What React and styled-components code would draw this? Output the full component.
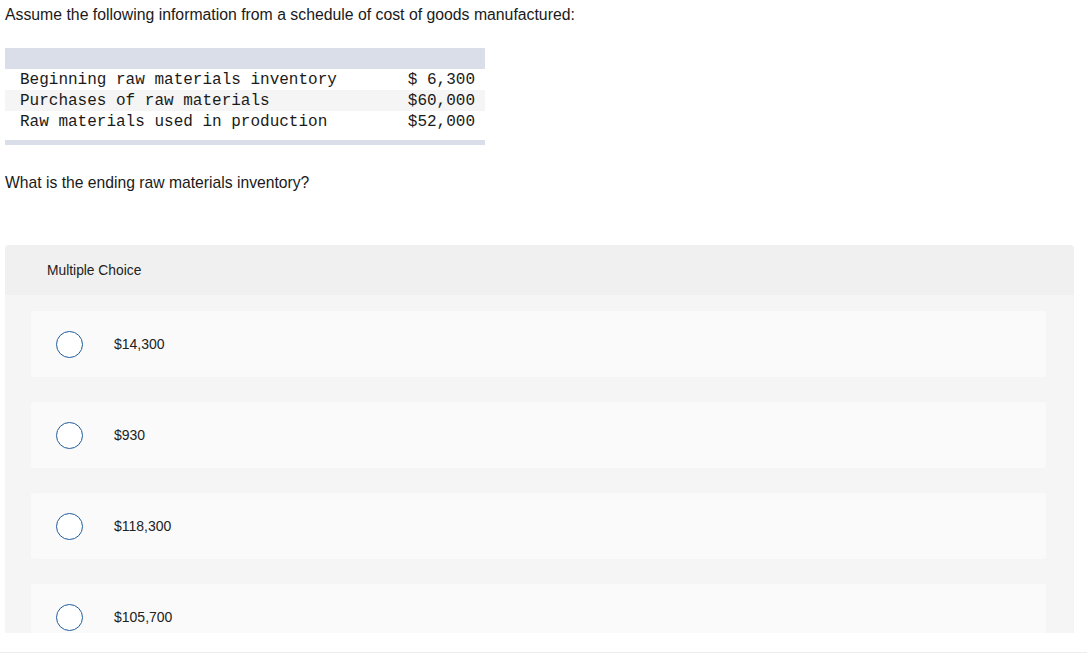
import React from 'react'
import styled, { createGlobalStyle } from 'styled-components'

const rows = [
  { label: 'Beginning raw materials inventory', amount: '$ 6,300' },
  { label: 'Purchases of raw materials', amount: '$60,000' },
  { label: 'Raw materials used in production', amount: '$52,000' },
]

const choices = ['$14,300', '$930', '$118,300', '$105,700']

const App = () => {
  return (
    <Page>
      <GlobalStyle />
      <Title>Assume the following information from a schedule of cost of goods manufactured:</Title>
      <Schedule>
        <HeadBand />
        {rows.map((r, i) => (
          <Row key={r.label} $alt={i === 1}>
            <span>{r.label}</span>
            <span>{r.amount}</span>
          </Row>
        ))}
        <FootBand />
      </Schedule>
      <Question>What is the ending raw materials inventory?</Question>
      <Panel>
        <PanelHead>Multiple Choice</PanelHead>
        <Choices>
          {choices.map((c) => (
            <Choice key={c}>
              <Radio />
              <ChoiceText>{c}</ChoiceText>
            </Choice>
          ))}
        </Choices>
      </Panel>
      <Footer />
    </Page>
  )
}

export default App

const GlobalStyle = createGlobalStyle`
  body {
    margin: 0;
    background: #fff;
    font-family: "Liberation Sans", Arial, sans-serif;
    color: #1a1a1a;
  }
`

const Page = styled.div`
  padding: 5px 13px 0 5px;
  height: 656px;
  box-sizing: border-box;
  overflow: hidden;
`

const Title = styled.div`
  font-size: 15.8px;
  line-height: 20px;
`

const Schedule = styled.div`
  margin-top: 23px;
  width: 480px;
  font-family: "Liberation Mono", "Courier New", monospace;
  font-size: 16px;
  color: #1a1a1a;
`

const HeadBand = styled.div`
  height: 21px;
  background: #d9dee8;
`

const Row = styled.div`
  display: flex;
  justify-content: space-between;
  height: 21px;
  box-sizing: border-box;
  padding: 2px 10px 0 15px;
  line-height: 19px;
  background: ${(p) => (p.$alt ? '#f5f5f5' : '#fff')};
`

const FootBand = styled.div`
  margin-top: 8px;
  height: 5px;
  background: #d9dee8;
`

const Question = styled.div`
  margin-top: 28px;
  font-size: 15.7px;
  line-height: 20px;
`

const Panel = styled.div`
  margin-top: 52px;
  height: 388px;
  overflow: hidden;
  background: #f5f5f5;
  border-radius: 4px 4px 0 0;
`

const PanelHead = styled.div`
  height: 50px;
  display: flex;
  align-items: center;
  padding-left: 42px;
  background: #f0f0f0;
  font-size: 13.8px;
  color: #222;
`

const Choices = styled.div`
  display: flex;
  flex-direction: column;
  gap: 25px;
  padding: 16px 28px 0 26px;
`

const Choice = styled.div`
  height: 66px;
  flex-shrink: 0;
  display: flex;
  align-items: center;
  padding-left: 25px;
  background: #fafafa;
  border-radius: 3px;
`

const Radio = styled.span`
  width: 25px;
  height: 25px;
  border-radius: 50%;
  border: 1.5px solid #1f5c9a;
  background: #fff;
  flex-shrink: 0;
`

const ChoiceText = styled.span`
  margin-left: 31px;
  font-size: 14px;
  color: #222;
`

const Footer = styled.div`
  margin-top: 19px;
  margin-right: -13px;
  margin-left: -5px;
  border-top: 1px solid #ececec;
`
